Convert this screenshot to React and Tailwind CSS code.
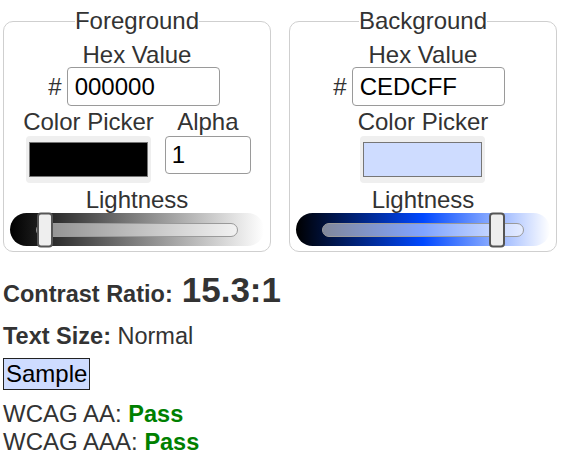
import React from "react";

const panels = [
  {
    title: "Foreground",
    hex: "000000",
    color: "#000000",
    alpha: "1",
    lightness: 0,
    rowShift: "pr-[6px]",
    trackBg: "bg-[linear-gradient(to_right,#000000,#808080,#ffffff)]",
  },
  {
    title: "Background",
    hex: "CEDCFF",
    color: "#CEDCFF",
    alpha: null,
    lightness: 0.9,
    rowShift: "pr-[8px]",
    trackBg: "bg-[linear-gradient(to_right,#000000,#0048ff,#ffffff)]",
  },
];

const Slider = ({ lightness, trackBg }) => (
  <div className={`mt-[1px] h-[33px] rounded-full px-[26px] flex items-center ${trackBg}`}>
    <div className="relative w-full h-[14px] rounded-full border border-[#9a9a9a] bg-white/50">
      <div
        className="absolute top-1/2 -translate-y-1/2 w-[16px] h-[35px] rounded-[4px] border-2 border-[#555] bg-[#eeeeee]"
        style={{ left: `calc((100% - 16px) * ${lightness})` }}
      />
    </div>
  </div>
);

const ColorPanel = ({ p }) => (
  <fieldset className="w-[268px] border border-[#cfcfcf] rounded-[10px] px-[6px] pb-[5px] text-center text-[24px] text-[#333]">
    <legend className="mx-auto px-0 leading-[28px]">{p.title}</legend>

    {/* Hex */}
    <div className="mt-[7px] leading-[25px]">Hex Value</div>
    <div className={`flex justify-center items-center gap-[5px] ${p.rowShift}`}>
      <span className="leading-[25px]">#</span>
      <input
        readOnly
        value={p.hex}
        className="w-[153px] h-[39px] border border-[#9a9a9a] rounded-[4px] px-[7px] text-[24px] text-black bg-white outline-none"
      />
    </div>

    {/* Picker + alpha */}
    <div className="mt-[3px] flex justify-center gap-[11px]">
      <div className="flex flex-col items-center">
        <span className="leading-[25px]">Color Picker</span>
        <div className="mt-[2px] w-[125px] h-[47px] bg-[#efefef] rounded-[4px] px-[3px] py-[6px]">
          <div className="h-full border border-[#767676]" style={{ background: p.color }} />
        </div>
      </div>
      {p.alpha && (
        <div className="flex flex-col items-center">
          <span className="leading-[25px]">Alpha</span>
          <input
            readOnly
            value={p.alpha}
            className="mt-[2px] w-[86px] h-[38px] border border-[#9a9a9a] rounded-[4px] px-[6px] text-[24px] text-black bg-white outline-none"
          />
        </div>
      )}
    </div>

    {/* Lightness */}
    <div className="mt-[5px] leading-[24px]">Lightness</div>
    <Slider lightness={p.lightness} trackBg={p.trackBg} />
  </fieldset>
);

export default function App() {
  return (
    <div className="w-[582px] h-[458px] bg-white overflow-hidden font-['Liberation_Sans',Arial,sans-serif]">
      <div className="pt-[7px] pl-[3px] flex gap-[18px]">
        {panels.map((p) => (
          <ColorPanel key={p.title} p={p} />
        ))}
      </div>

      {/* Results */}
      <div className="pl-[3px] text-[#333]">
        <div className="mt-[12px] flex items-baseline">
          <span className="font-bold text-[23.5px] leading-normal">Contrast Ratio:</span>
          <span className="ml-[9px] font-bold text-[35px] leading-normal">15.3:1</span>
        </div>

        <div className="mt-[6px] text-[23.5px] leading-[27px]">
          <span className="font-bold">Text Size:</span> Normal
        </div>

        <div className="mt-[8px] leading-none">
          <span className="inline-block border border-[#222] bg-[#CEDCFF] px-[2px] text-[24px] leading-[30px] text-black">
            Sample
          </span>
        </div>

        <div className="mt-[10px] text-[24px] leading-[28px]">
          <div>
            WCAG AA: <span className="font-bold text-[23.5px] text-[#008000]">Pass</span>
          </div>
          <div>
            WCAG AAA: <span className="font-bold text-[23.5px] text-[#008000]">Pass</span>
          </div>
        </div>
      </div>
    </div>
  );
}
